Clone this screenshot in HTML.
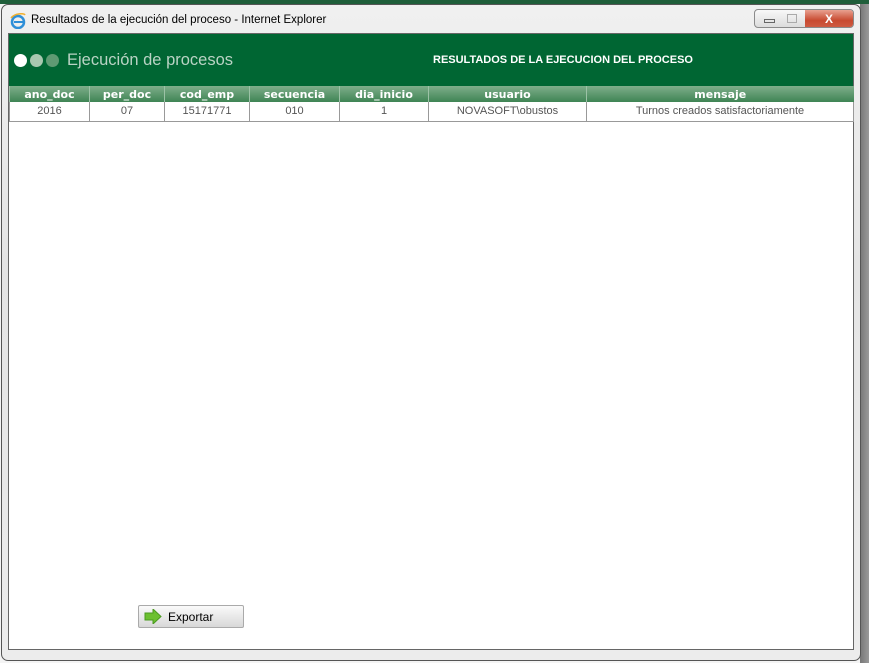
<!DOCTYPE html>
<html><head><meta charset="utf-8"><style>
*{margin:0;padding:0;box-sizing:border-box}
body{width:869px;height:663px;overflow:hidden;background:#f4f4f4;font-family:"Liberation Sans",sans-serif;position:relative}
.topg{position:absolute;left:0;top:0;width:869px;height:4px;background:#1f5e3a}
.rside{position:absolute;left:860px;top:4px;width:9px;height:659px;background:linear-gradient(90deg,#777,#999)}
.win{position:absolute;left:1px;top:4px;width:860px;height:657px;border:1px solid #555;border-radius:7px;background:linear-gradient(180deg,#f0f0f0,#e4e4e4 40%,#ececec)}
.title{position:absolute;left:29px;top:9px;font-size:11.5px;color:#000}
.ie{position:absolute;left:8px;top:8px;width:16px;height:16px}
.btns{position:absolute;left:752px;top:4px;width:100px;height:19px;border:1px solid #8a8a8a;border-radius:4px;background:linear-gradient(#f8f8f8,#dcdcdc);overflow:hidden}
.btns .x{position:absolute;right:0;top:0;width:48px;height:19px;background:linear-gradient(#e8a090,#c84a30 55%,#d06048);color:#fff;font-size:12px;font-weight:bold;text-align:center;line-height:18px}
.content{position:absolute;left:6px;top:28px;width:846px;height:617px;background:#fff;border:1px solid #666}
.hdr{position:absolute;left:0;top:0;width:844px;height:52px;background:#006633}
.dots{position:absolute;left:5px;top:20px}
.dots span{display:inline-block;width:13px;height:13px;border-radius:50%;margin-right:3px}
.h1{position:absolute;left:58px;top:17px;color:#b9d3c4;font-size:16.5px}
.h2{position:absolute;left:424px;top:20px;color:#fff;font-size:11px;font-weight:bold}
table{position:absolute;left:0;top:52px;border-collapse:collapse;width:845px}
th{height:16px;background:linear-gradient(#7fae8b,#3f8454);color:#fff;font-family:"DejaVu Sans",sans-serif;font-size:11px;font-weight:bold;border-left:1px solid #9cc2a6;padding:0}
td{height:19px;font-size:11px;color:#555;text-align:center;border:1px solid #999;border-top:none}
.exp{position:absolute;left:129px;top:571px;width:106px;height:23px;border:1px solid #aaa;border-radius:2px;background:linear-gradient(#fafafa,#d8d8d8);font-size:12px;color:#000}
.exp span{position:absolute;left:29px;top:4px}
</style></head><body>
<div class="topg"></div><div class="rside"></div>
<div class="win">
<svg class="ie" viewBox="0 0 16 16"><circle cx="8" cy="9" r="6" fill="none" stroke="#2f8fd8" stroke-width="2.5"/><rect x="4" y="8" width="9" height="2" fill="#2f8fd8"/><path d="M1 5 C5 0 14 0 15 2" stroke="#f0b030" stroke-width="1.5" fill="none"/></svg>
<div class="title">Resultados de la ejecución del proceso - Internet Explorer</div>
<div class="btns"><div class="x">X</div><span style="position:absolute;left:9px;top:9px;width:11px;height:4px;border:1px solid #666"></span><span style="position:absolute;left:32px;top:4px;width:10px;height:9px;border:1px solid #aaa"></span></div>
<div class="content">
<div class="hdr">
<div class="dots"><span style="background:#fff"></span><span style="background:#a8c8b0"></span><span style="background:#5f9a73"></span></div>
<div class="h1">Ejecución de procesos</div>
<div class="h2">RESULTADOS DE LA EJECUCION DEL PROCESO</div>
</div>
<table><tr><th style="width:80px">ano_doc</th><th style="width:75px">per_doc</th><th style="width:85px">cod_emp</th><th style="width:90px">secuencia</th><th style="width:89px">dia_inicio</th><th style="width:158px">usuario</th><th>mensaje</th></tr>
<tr><td>2016</td><td>07</td><td>15171771</td><td>010</td><td>1</td><td>NOVASOFT\obustos</td><td>Turnos creados satisfactoriamente</td></tr></table>
<div class="exp"><svg style="position:absolute;left:5px;top:3px" width="18" height="15" viewBox="0 0 18 15"><path d="M1 4h8V0l8 7.5-8 7.5v-4H1z" fill="#6cc030" stroke="#4a9a20"/></svg><span>Exportar</span></div>
</div>
</div>
</body></html>
